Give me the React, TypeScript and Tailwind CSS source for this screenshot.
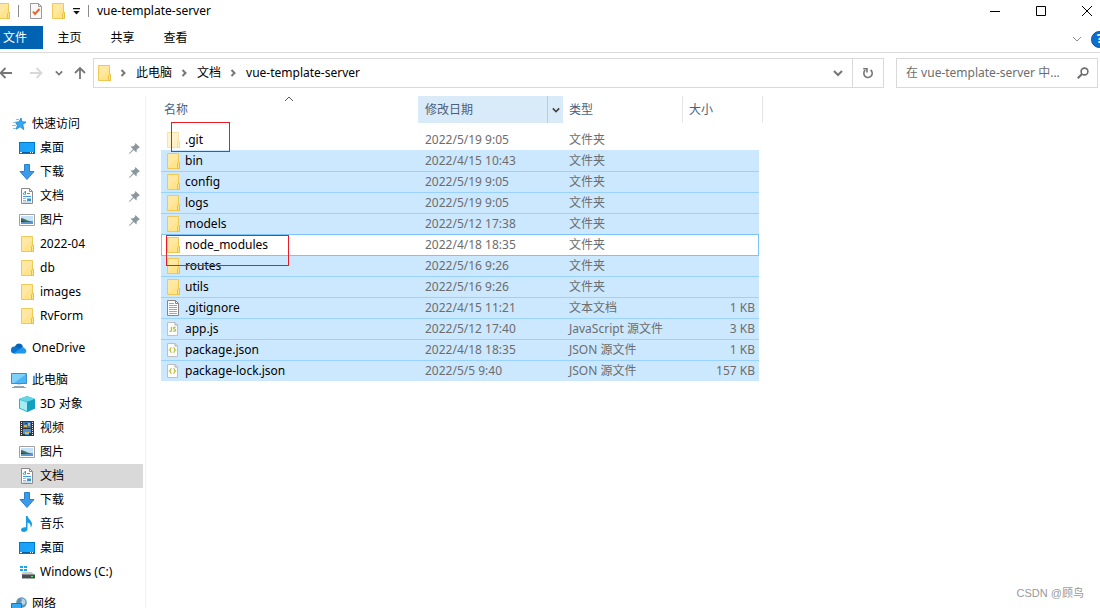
import { useState, type FC, type ReactNode } from 'react'

// ── Icons ───────────────────────────────────────────────────────

const FolderIcon: FC<{ faded?: boolean }> = ({ faded }) => (
  <svg width="13" height="16" viewBox="0 0 13 16" className={faded ? 'opacity-50' : ''}>
    <path d="M0.5 0.5H11.5V9.5H12.5V15.5H0.5Z" fill="#ffe48c" stroke="#efc956" />
    <path d="M1 1H11V4L1 14Z" fill="#ffe9a2" />
    <path d="M10.5 15.5V10.5L11.5 9.5H12.5V15.5Z" fill="#ffe28a" stroke="#e9bf45" />
  </svg>
)

const DesktopIcon: FC = () => (
  <svg width="16" height="12" viewBox="0 0 16 12" shapeRendering="crispEdges">
    <rect width="16" height="12" fill="#0078c8" />
    <rect x="1" y="1" width="14" height="9" fill="#1ba1f8" />
    <path d="M15 1V10H5Z" fill="#12a9ff" />
    <path d="M1 10h14v1H1z" fill="#005b9c" />
    <path d="M1 10h2v1H1zM11 10h1v1h-1zM13 10h1v1h-1z" fill="#fff" />
  </svg>
)

const DownloadIcon: FC = () => (
  <svg width="16" height="16" viewBox="0 0 16 16">
    <path d="M5.5 0.5H10.5V7.5H15L8 15.5L1 7.5H5.5Z" fill="#3c9be8" stroke="#2a7fce" />
  </svg>
)

const DocumentIcon: FC = () => (
  <svg width="12" height="16" viewBox="0 0 12 16">
    <path d="M0.5 0.5H8.5L11.5 3.5V15.5H0.5Z" fill="#fff" stroke="#8a8a8a" />
    <path d="M8.5 0.5V3.5H11.5" fill="none" stroke="#8a8a8a" />
    <path d="M2 6L4.5 3V6.5M6 5.5H9M2 8.5H10" fill="none" stroke="#3f9bdb" />
    <path d="M2 6.5H5M2 10.5H5M2 12.5H5M2 14H10" stroke="#9fb6c8" />
    <path d="M6 10H10V13H6Z" fill="#3c8dcb" />
    <path d="M6 10H10V11H6Z" fill="#9ccbee" />
  </svg>
)

const PictureIcon: FC = () => (
  <svg width="16" height="12" viewBox="0 0 16 12">
    <path d="M0.5 0.5H15.5V11.5H0.5Z" fill="#fff" stroke="#a0a0a0" />
    <path d="M2 2H14V10H2Z" fill="#c4e2f8" />
    <path d="M2 4C5 4 7 7 14 7.5V8H2Z" fill="#42705d" />
    <path d="M2 8H14V10H2Z" fill="#5b96cc" />
    <path d="M2 6.5L7 8H2Z" fill="#234b40" />
  </svg>
)

const StarIcon: FC = () => (
  <svg width="15" height="14" viewBox="0 0 15 14">
    <path d="M9 1L10 4.8L14 5L10.8 7.6L11.8 12.6L8 9.8L4.2 12.2L5.4 8.2L3.2 5.2L7 5Z" fill="#35a9f0" stroke="#1681cf" strokeWidth="0.8" />
    <path d="M4 2.5H7M1 5.5H4M0 8.5H4M1 11.5H4" stroke="#7fc4f1" />
  </svg>
)

const PinIcon: FC = () => (
  <svg width="11" height="11" viewBox="0 0 11 11">
    <path d="M6.5 0L11 4.5L9.6 5L7.8 6.6L7.5 9.5L4.7 7L0.8 10.8L0 10.5L0.3 10L4 6.2L1.5 3.6L4.5 3.2L6 1.5Z" fill="#8b979f" />
  </svg>
)

const OneDriveIcon: FC = () => (
  <svg width="16" height="11" viewBox="0 0 16 11">
    <path d="M4 3.2A4.3 4.3 0 0 1 12 3.4L10 6L4 8Z" fill="#0861b8" />
    <path d="M3.4 10.6A3.4 3.4 0 0 1 3.6 3.6C5 3.5 6 4 10.5 7L5 10.6Z" fill="#0a72cf" />
    <path d="M3 10L9.5 5.2C10.8 4 13 4 13.6 5.6A2.6 2.6 0 0 1 13.4 10.6H3.6Z" fill="#1f97ea" />
  </svg>
)

const ComputerIcon: FC = () => (
  <svg width="16" height="15" viewBox="0 0 16 15">
    <path d="M0.5 0.5H15.5V10.5H0.5Z" fill="#4db5f5" stroke="#3d8fc4" />
    <path d="M1 1H15L3 10H1Z" fill="#7fd0fb" />
    <path d="M6 11H10V12H6Z" fill="#d5dde2" />
    <path d="M3 13H13V14H3ZM1 14H15V15H1Z" fill="#8fa4b3" />
  </svg>
)

const CubeIcon: FC = () => (
  <svg width="16" height="16" viewBox="0 0 16 16">
    <path d="M8 0L16 3V12.5L8 16L0 12.5V3Z" fill="#27b1cc" />
    <path d="M8 0L16 3L8 6L0 3Z" fill="#62d6e6" />
    <path d="M1 4L8 6.5V15L1 12Z" fill="#a6edf3" />
    <path d="M8 6L16 3V12.5L8 16Z" fill="#149fc2" />
  </svg>
)

const VideoIcon: FC = () => (
  <svg width="14" height="15" viewBox="0 0 14 15" shapeRendering="crispEdges">
    <path d="M0 0H14V15H0Z" fill="#33363a" />
    <path d="M3 1H11V7H3Z" fill="#3976bd" />
    <path d="M3 8H11V14H3Z" fill="#4f94dc" />
    <path d="M4 4H7V6H4ZM8 2H10V5H8ZM5 11H9V13H5Z" fill="#d6b83c" />
    <path d="M5 2H7V3H5ZM3 13H5V14H3ZM9 12H11V14H9Z" fill="#273f3a" />
    <path d="M1.5 1V15M12.5 1V15" stroke="#e9e9e9" strokeDasharray="1 1" />
  </svg>
)

const MusicIcon: FC = () => (
  <svg width="12" height="16" viewBox="0 0 12 16">
    <path d="M5 0H6.5C7 3 11 4.5 11 8C11 9.5 10.5 10.5 9.5 11.5C10 8 8.5 7 6.5 6.5V13C6.5 15 4.5 16 2.7 16C1 16 0 15 0 13.8C0 12 2.5 10.8 5 11.3Z" fill="#169be8" />
  </svg>
)

const DriveIcon: FC = () => (
  <svg width="15" height="13" viewBox="0 0 15 13">
    <path d="M0 0H3V2H0ZM4 0H7V2H4ZM0 3H3V5H0ZM4 3H7V5H4Z" fill="#19a7f2" />
    <path d="M3 6H12L14.5 9H1Z" fill="#c9cccd" />
    <path d="M2 8.5H15V12.5H2Z" fill="#4a4e50" />
    <path d="M11 10H13V11H11Z" fill="#54e86b" />
  </svg>
)

const NetworkIcon: FC = () => (
  <svg width="16" height="15" viewBox="0 0 16 15">
    <circle cx="10.5" cy="5.5" r="5.3" fill="#5f93b4" />
    <path d="M8 1C11 1 12 4 9.5 5.5L12 8L14 7C15 5 14.5 3 13 2Z" fill="#b8d4e3" />
    <path d="M0.5 6.5H10.5V12.5H0.5Z" fill="#35a9f0" stroke="#1c76b5" />
    <path d="M3 14H9V15H3Z" fill="#8fa4b3" />
  </svg>
)

const TextFileIcon: FC = () => (
  <svg width="12" height="16" viewBox="0 0 12 16">
    <path d="M0.5 0.5H8.5L11.5 3.5V15.5H0.5Z" fill="#fff" stroke="#858585" />
    <path d="M8.5 0.5V3.5H11.5" fill="none" stroke="#858585" />
    <path d="M2 3.5H7M2 5.5H10M2 7.5H10M2 9.5H10M2 11.5H10M2 13.5H10" stroke="#a3a3a3" />
  </svg>
)

const CodeFileIcon: FC<{ kind: 'js' | 'json' }> = ({ kind }) => (
  <svg width="11" height="14" viewBox="0 0 11 14">
    <path d="M0.5 0.5H8L10.5 3V13.5H0.5Z" fill="#fcfcfa" stroke="#bcc0c2" />
    <path d="M8 0.5V3H10.5" fill="none" stroke="#a8adb0" />
    {kind === 'js' ? (
      <path d="M4.5 5V8.6C4.5 9.4 3 9.6 2.5 8.8M8.6 5.6C7.8 5 6.5 5.1 6.5 6C6.5 7.2 8.6 6.8 8.6 8.2C8.6 9.4 6.8 9.4 6.2 8.7" fill="none" stroke="#b5ba35" strokeWidth="1.2" />
    ) : (
      <path d="M4.6 4.5C3 4.5 3.8 6.5 2.7 7C3.8 7.5 3 9.5 4.6 9.5M6.4 4.5C8 4.5 7.2 6.5 8.3 7C7.2 7.5 8 9.5 6.4 9.5" fill="none" stroke="#b5ba35" strokeWidth="1.2" />
    )}
  </svg>
)

const Chevron: FC<{ dir: 'right' | 'down' | 'up'; size?: number; width?: number }> = ({ dir, size = 10, width = 1 }) => (
  <svg width={size} height={size} viewBox="0 0 10 10" fill="none" stroke="currentColor" strokeWidth={width}>
    {dir === 'right' && <path d="M3.5 2L6.5 5L3.5 8" />}
    {dir === 'down' && <path d="M1 3L5 7L9 3" />}
    {dir === 'up' && <path d="M1 7L5 3L9 7" />}
  </svg>
)

const ArrowIcon: FC<{ d: string }> = ({ d }) => (
  <svg width="14" height="14" viewBox="0 0 14 14" fill="none" stroke="currentColor" strokeWidth="1.8">
    <path d={d} />
  </svg>
)

// ── Data ────────────────────────────────────────────────────────

interface NavItem {
  id: string
  label: string
  icon: ReactNode
  pinned?: boolean
}

interface NavGroup {
  root: NavItem
  items: NavItem[]
}

const NAV: NavGroup[] = [
  {
    root: { id: 'quick', label: '快速访问', icon: <StarIcon /> },
    items: [
      { id: 'q-desktop', label: '桌面', icon: <DesktopIcon />, pinned: true },
      { id: 'q-downloads', label: '下载', icon: <DownloadIcon />, pinned: true },
      { id: 'q-documents', label: '文档', icon: <DocumentIcon />, pinned: true },
      { id: 'q-pictures', label: '图片', icon: <PictureIcon />, pinned: true },
      { id: 'q-2022', label: '2022-04', icon: <FolderIcon /> },
      { id: 'q-db', label: 'db', icon: <FolderIcon /> },
      { id: 'q-images', label: 'images', icon: <FolderIcon /> },
      { id: 'q-rvform', label: 'RvForm', icon: <FolderIcon /> },
    ],
  },
  { root: { id: 'onedrive', label: 'OneDrive', icon: <OneDriveIcon /> }, items: [] },
  {
    root: { id: 'pc', label: '此电脑', icon: <ComputerIcon /> },
    items: [
      { id: '3d', label: '3D 对象', icon: <CubeIcon /> },
      { id: 'videos', label: '视频', icon: <VideoIcon /> },
      { id: 'pictures', label: '图片', icon: <PictureIcon /> },
      { id: 'documents', label: '文档', icon: <DocumentIcon /> },
      { id: 'downloads', label: '下载', icon: <DownloadIcon /> },
      { id: 'music', label: '音乐', icon: <MusicIcon /> },
      { id: 'desktop', label: '桌面', icon: <DesktopIcon /> },
      { id: 'c', label: 'Windows (C:)', icon: <DriveIcon /> },
    ],
  },
  { root: { id: 'network', label: '网络', icon: <NetworkIcon /> }, items: [] },
]

interface FileRow {
  name: string
  date: string
  type: string
  size?: string
  icon: ReactNode
  state: 'plain' | 'selected' | 'focused'
}

const FILES: FileRow[] = [
  { name: '.git', date: '2022/5/19 9:05', type: '文件夹', icon: <FolderIcon faded />, state: 'plain' },
  { name: 'bin', date: '2022/4/15 10:43', type: '文件夹', icon: <FolderIcon />, state: 'selected' },
  { name: 'config', date: '2022/5/19 9:05', type: '文件夹', icon: <FolderIcon />, state: 'selected' },
  { name: 'logs', date: '2022/5/19 9:05', type: '文件夹', icon: <FolderIcon />, state: 'selected' },
  { name: 'models', date: '2022/5/12 17:38', type: '文件夹', icon: <FolderIcon />, state: 'selected' },
  { name: 'node_modules', date: '2022/4/18 18:35', type: '文件夹', icon: <FolderIcon />, state: 'focused' },
  { name: 'routes', date: '2022/5/16 9:26', type: '文件夹', icon: <FolderIcon />, state: 'selected' },
  { name: 'utils', date: '2022/5/16 9:26', type: '文件夹', icon: <FolderIcon />, state: 'selected' },
  { name: '.gitignore', date: '2022/4/15 11:21', type: '文本文档', size: '1 KB', icon: <TextFileIcon />, state: 'selected' },
  { name: 'app.js', date: '2022/5/12 17:40', type: 'JavaScript 源文件', size: '3 KB', icon: <CodeFileIcon kind="js" />, state: 'selected' },
  { name: 'package.json', date: '2022/4/18 18:35', type: 'JSON 源文件', size: '1 KB', icon: <CodeFileIcon kind="json" />, state: 'selected' },
  { name: 'package-lock.json', date: '2022/5/5 9:40', type: 'JSON 源文件', size: '157 KB', icon: <CodeFileIcon kind="json" />, state: 'selected' },
]

// Colour of the line above a row
const lineColor = (i: number) => {
  const row = FILES[i]
  const prev = FILES[i - 1]
  if (row.state === 'focused' || prev?.state === 'focused') return 'border-[#7cc3f8]'
  if (row.state === 'selected' && prev?.state === 'selected') return 'border-[#99d1ff]'
  return row.state === 'selected' ? 'border-[#cce8ff]' : 'border-transparent'
}

// ── Header ──────────────────────────────────────────────────────

const TitleBar: FC = () => (
  <header className="flex h-[22px] items-center justify-between">
    <div className="-ml-[3px] flex items-center">
      <FolderIcon />
      <span className="mx-2 h-3 w-px bg-[#8a8a8a]" />
      <button aria-label="属性" className="ml-[3px]">
        <svg width="12" height="16" viewBox="0 0 12 16">
          <path d="M0.5 0.5H8.5L11.5 3.5V15.5H0.5Z" fill="#f8f8f8" stroke="#9a9a9a" />
          <path d="M8.5 0.5V3.5H11.5" fill="none" stroke="#9a9a9a" />
          <path d="M3 8.5L5 11L9.5 6" fill="none" stroke="#e8632a" strokeWidth="2" />
        </svg>
      </button>
      <button aria-label="新建文件夹" className="ml-[10px]"><FolderIcon /></button>
      <button aria-label="自定义快速访问工具栏" className="ml-2">
        <svg width="7" height="7" viewBox="0 0 7 7"><path d="M0 0H7V1.2H0ZM0.2 3H6.8L3.5 6.5Z" fill="#111" /></svg>
      </button>
      <span className="mx-2 h-3 w-px bg-[#8a8a8a]" />
      <h1>vue-template-server</h1>
    </div>
    <div className="flex items-center text-black">
      <button aria-label="最小化" className="flex w-[46px] justify-center">
        <svg width="10" height="10" viewBox="0 0 10 10"><path d="M0 5.5H10" stroke="currentColor" /></svg>
      </button>
      <button aria-label="最大化" className="flex w-[46px] justify-center">
        <svg width="10" height="10" viewBox="0 0 10 10"><path d="M0.5 0.5H9.5V9.5H0.5Z" fill="none" stroke="currentColor" /></svg>
      </button>
      <button aria-label="关闭" className="flex w-[46px] justify-center -mr-[10px]">
        <svg width="10" height="10" viewBox="0 0 10 10"><path d="M0 0L10 10M10 0L0 10" stroke="currentColor" /></svg>
      </button>
    </div>
  </header>
)

const Ribbon: FC = () => (
  <nav className="mt-1 flex h-[27px] items-start justify-between border-b border-[#dadbdc]">
    <div className="flex h-[23px] items-center">
      <button className="h-full w-[43px] bg-[#0063b1] pl-[3px] text-left text-white">文件</button>
      <button className="w-[53px]">主页</button>
      <button className="w-[53px]">共享</button>
      <button className="w-[53px]">查看</button>
    </div>
    <div className="-mr-2 flex h-[26px] items-center gap-[9px]">
      <button aria-label="展开功能区" className="text-[#8c8c8c]"><Chevron dir="down" /></button>
      <button aria-label="帮助" className="flex size-[17px] items-center justify-center rounded-full border border-[#0a4f95] bg-[#0a6fcf] font-bold text-white">?</button>
    </div>
  </nav>
)

const AddressBar: FC = () => (
  <div className="flex h-[30px] items-center">
    <div className="flex w-[93px] items-center text-[#767676]">
      <button aria-label="后退" className="-ml-px"><ArrowIcon d="M13 7H1.5M6.5 2L1.5 7L6.5 12" /></button>
      <button aria-label="前进" className="ml-4 text-[#d8d8d8]"><ArrowIcon d="M1 7H12.5M7.5 2L12.5 7L7.5 12" /></button>
      <button aria-label="最近浏览的位置" className="ml-3"><Chevron dir="down" size={8} width={2} /></button>
      <button aria-label="上移" className="ml-[10px]"><ArrowIcon d="M7 13V2M2 7L7 2L12 7" /></button>
    </div>
    <div className="flex h-full flex-1 items-center border border-[#d9d9d9]">
      <div className="flex flex-1 items-center pl-1">
        <FolderIcon />
        {['此电脑', '文档', 'vue-template-server'].map((part) => (
          <div key={part} className="flex items-center">
            <span className="flex w-[25px] pl-[7px] text-[#767676]"><Chevron dir="right" width={2} /></span>
            <button>{part}</button>
          </div>
        ))}
      </div>
      <button aria-label="以前的位置" className="flex w-7 justify-center text-[#767676]"><Chevron dir="down" width={2} /></button>
      <button aria-label="刷新" className="flex h-full w-[31px] items-center justify-center border-l border-[#d9d9d9] text-[#767676]">
        <svg width="12" height="12" viewBox="0 0 12 12" fill="none" stroke="currentColor" strokeWidth="1.6">
          <path d="M8.6 3A4.2 4.2 0 1 1 3.2 3.2" />
          <path d="M1.2 1.8H5V5.6" />
        </svg>
      </button>
    </div>
    <label className="mr-[2px] ml-3 flex h-full w-[202px] items-center border border-[#d9d9d9] pr-2 pl-[9px]">
      <input
        type="text"
        aria-label="搜索"
        placeholder="在 vue-template-server 中..."
        className="min-w-0 flex-1 outline-none placeholder:text-[#6d6d6d]"
      />
      <svg width="12" height="12" viewBox="0 0 12 12" fill="none" stroke="#6d6d6d">
        <circle cx="7.5" cy="4.5" r="3.4" strokeWidth="1.6" />
        <path d="M5 7L0.8 11.2" strokeWidth="2" />
      </svg>
    </label>
  </div>
)

// ── Sidebar ─────────────────────────────────────────────────────

const Sidebar: FC = () => {
  const [current, setCurrent] = useState('documents')

  return (
    <aside className="w-[146px] shrink-0 border-r border-[#f0f0f0] pt-4 pr-[2px]">
      {NAV.map(({ root, items }) => (
        <ul key={root.id} className="mb-2">
          {[root, ...items].map((item) => (
            <li key={item.id}>
              <button
                onClick={() => setCurrent(item.id)}
                className={`flex h-6 w-full items-center gap-[5px] pr-[3px] text-left ${item === root ? 'pl-[11px]' : 'pl-[19px]'} ${current === item.id ? 'bg-[#d9d9d9]' : ''}`}
              >
                <span className="flex w-4 shrink-0 justify-center">{item.icon}</span>
                <span className="flex-1 whitespace-nowrap">{item.label}</span>
                {item.pinned && <PinIcon />}
              </button>
            </li>
          ))}
        </ul>
      ))}
    </aside>
  )
}

// ── File list ───────────────────────────────────────────────────

const FileList: FC = () => (
  <div className="relative ml-[15px] self-start">
    <table className="w-[602px] table-fixed border-separate border-spacing-0 text-left">
      <colgroup>
        <col className="w-[257px]" />
        <col className="w-[145px]" />
        <col className="w-[120px]" />
        <col className="w-[76px]" />
        <col className="w-1" />
      </colgroup>
      <thead className="text-[#4c607a]">
        <tr className="h-[27px]">
          <th className="relative p-0 pl-[3px] font-normal">
            名称
            <span className="absolute top-[-2px] left-[123px] text-[#5a5a5a]"><Chevron dir="up" /></span>
          </th>
          <th className="bg-[#d9ebf9] p-0 font-normal">
            <div className="flex h-[27px] items-center">
              <span className="flex-1 pl-[7px]">修改日期</span>
              <button aria-label="筛选" className="flex h-full w-4 items-center justify-center border-l border-[#b9cfe2] text-[#444]"><Chevron dir="down" size={8} width={2} /></button>
            </div>
          </th>
          <th className="border-r border-[#e5e5e5] p-0 pl-[6px] font-normal">类型</th>
          <th colSpan={2} className="border-r border-[#e5e5e5] p-0 pl-[6px] font-normal">大小</th>
        </tr>
      </thead>
      <tbody className="text-[#6d6d6d]">
        <tr className="h-[6px]"><td colSpan={5} className="p-0" /></tr>
        {FILES.map((row, i) => {
          const cell = `border-t p-0 ${lineColor(i)} ${row.state === 'selected' ? 'bg-[#cce8ff]' : ''}`
          const focused = row.state === 'focused'
          return (
            <tr key={row.name} className="h-[21px] leading-5">
              <td className={`${cell} ${focused ? 'border-l pl-[5px]' : 'pl-[6px]'}`}>
                <div className="flex items-center gap-[5px] text-black">
                  <span className="flex w-[13px]">{row.icon}</span>
                  {row.name}
                </div>
              </td>
              <td className={`${cell} pl-[7px]`}>{row.date}</td>
              <td className={`${cell} pl-[6px]`}>{row.type}</td>
              <td className={`${cell} pr-1 text-right ${focused ? 'border-r' : ''}`}>{row.size}</td>
              <td className="p-0" />
            </tr>
          )
        })}
      </tbody>
    </table>
    {/* Marks round .git and node_modules */}
    <div className="pointer-events-none absolute top-[26px] left-[10px] h-[30px] w-[59px] border border-[#e81c24]" />
    <div className="pointer-events-none absolute top-[139px] left-[5px] h-[31px] w-[123px] border border-[#e81c24]" />
  </div>
)

const App: FC = () => (
  <div className="relative flex h-screen flex-col overflow-hidden bg-white font-['Noto_Sans','Noto_Sans_CJK_SC',sans-serif] text-xs text-black">
    <TitleBar />
    <Ribbon />
    <div className="pt-[5px]">
      <AddressBar />
    </div>
    <main className="mt-2 flex min-h-0 flex-1">
      <Sidebar />
      <FileList />
    </main>
    <footer className="absolute right-4 bottom-[7px] font-['Liberation_Sans','Noto_Sans_CJK_SC',sans-serif] text-[11px] text-[#999]">CSDN @顾鸟</footer>
  </div>
)

export default App
